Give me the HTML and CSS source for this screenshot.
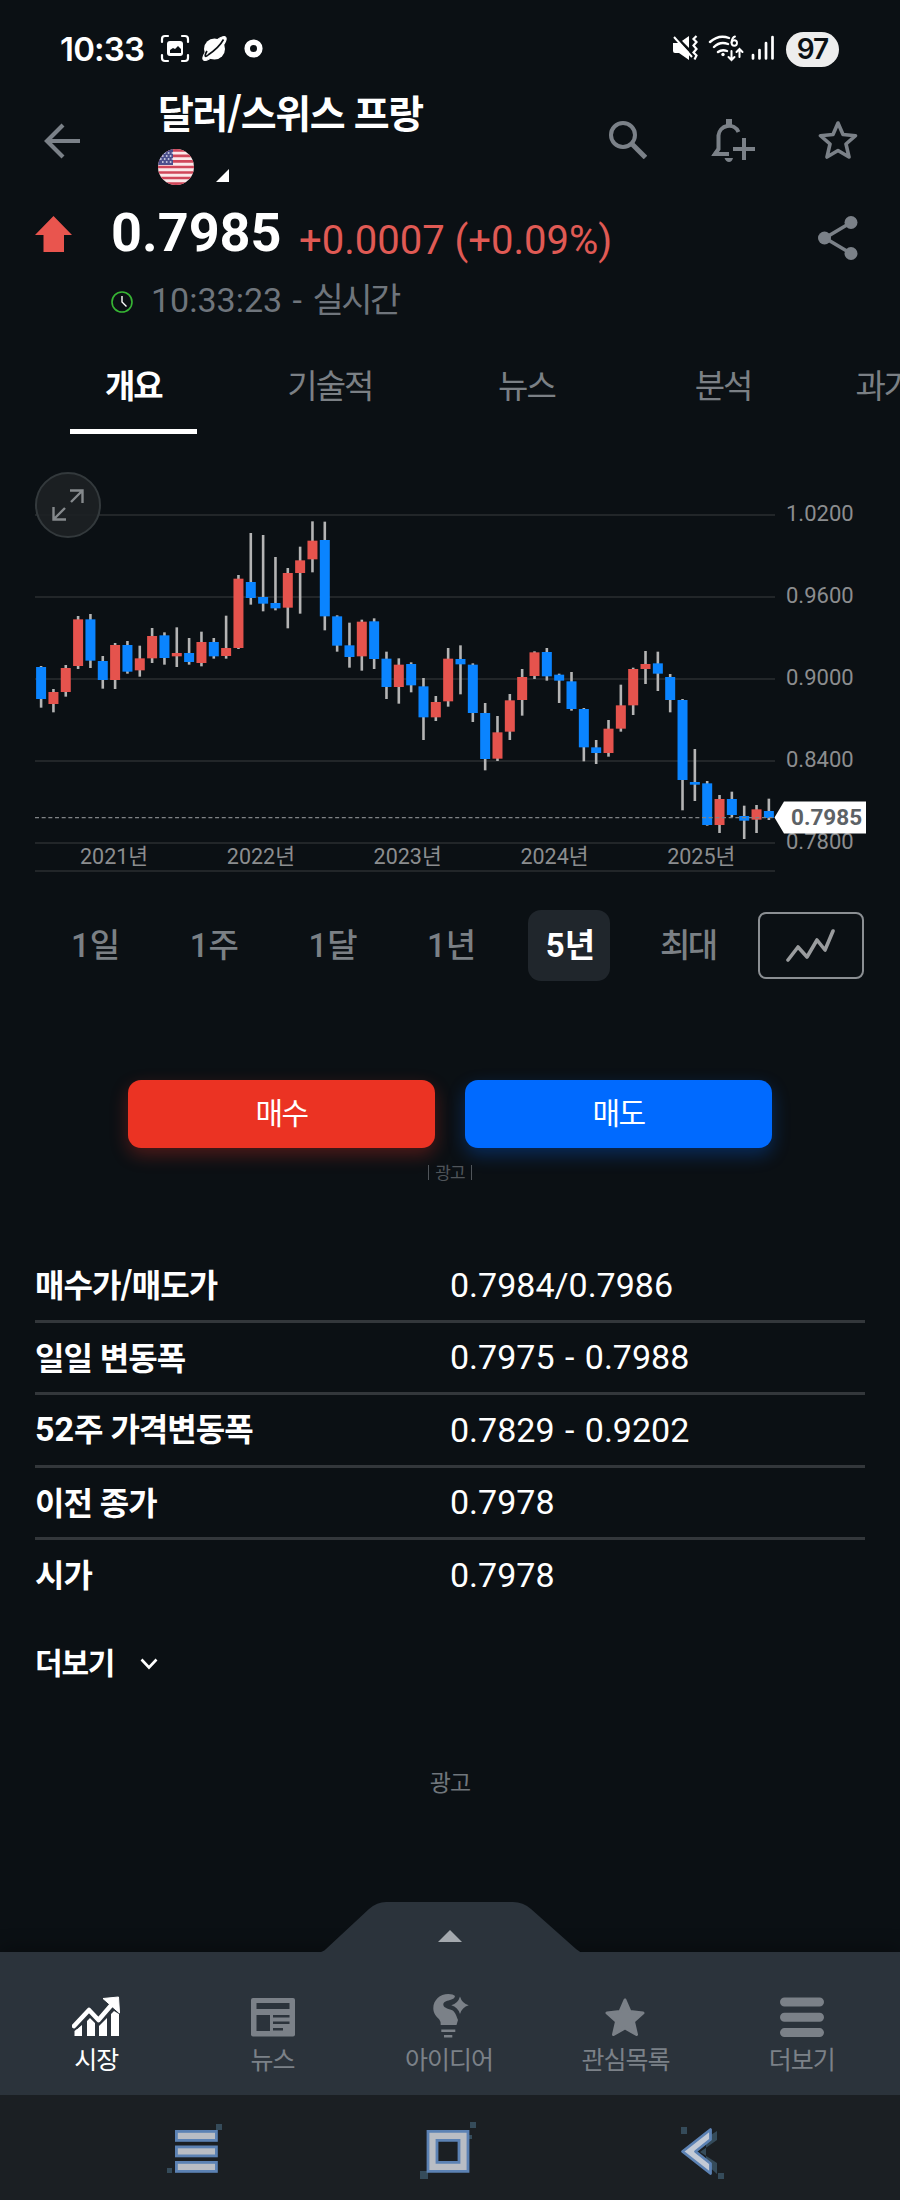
FILE: index.html
```html
<!DOCTYPE html>
<html lang="ko">

<head>
    <meta charset="utf-8">
    <title>달러/스위스 프랑</title>
    <link rel="stylesheet" href="styles.css">
</head>

<body>
    <div class="statusbar">
        <span class="clock">10:33</span>
        <svg class="st-left" width="104" height="30" viewBox="0 0 104 30">
            <g fill="none" stroke="#fff" stroke-width="2.2" stroke-linecap="round">
                <path d="M2 8V5a3 3 0 0 1 3-3h3M22 2h3a3 3 0 0 1 3 3v3M28 21v3a3 3 0 0 1-3 3h-3M8 27H5a3 3 0 0 1-3-3v-3" />
            </g>
            <rect x="7" y="7" width="16" height="15" rx="3" fill="#fff" />
            <path d="M10 19v-3l3-2 2 1 3-3 3 3v4z" fill="#0b1014" />
            <circle cx="54.5" cy="15" r="10.5" fill="#fff" />
            <ellipse cx="54.5" cy="14.5" rx="16" ry="5" transform="rotate(-46 54.5 14.5)" fill="#fff" stroke="#fff" />
            <path d="M48 21C54 17 61 10 63.500 5.500" stroke="#0b1014" stroke-width="1.6" fill="none" />
            <path d="M48 21c-3 3-4 1-1-4" stroke="#0b1014" stroke-width="1.6" fill="none" />
            <circle cx="93.500" cy="14.500" r="6.300" fill="none" stroke="#fff" stroke-width="5.600" />
        </svg>
        <div class="st-right">
            <svg width="104" height="30" viewBox="0 0 104 30">
                <path fill="#fff" d="M1 9h6l10-7v24l-10-7H3a2 2 0 0 1-2-2z" />
                <path d="M1 0l18 18" stroke="#0b1014" stroke-width="3" />
                <path d="M2 3l18 20" stroke="#fff" stroke-width="2" />
                <path d="M24.500 2l-3 3 3 3-3 3.500 3 3.500-3 3.500 3 3-2 4" stroke="#fff" stroke-width="2.200" fill="none" />
                <g fill="none" stroke="#fff" stroke-width="2.400" stroke-linecap="round">
                    <path d="M38 8q9-8 19-4M42 13q6-6 14-3M46 18q4-3 9-1" />
                    <path d="M63 2.500q-3 1-3.500 6" stroke-width="1.900" />
                    <circle cx="62.300" cy="9" r="2.700" stroke-width="1.900" />
                    <path d="M59.500 17v9m-3-3l3 3 3-3M67.500 23v-8m-3 3l3-3 3 3" stroke-width="2" />
                    <path d="M81 21v3.500M87.500 16v8.500M94 9v15.500M100.500 3v21.500" stroke-width="2.700" />
                </g>
                <circle cx="51" cy="20.500" r="1.700" fill="#fff" />
            </svg>
            <span class="battery">97</span>
        </div>
    </div>

    <div class="header">
        <svg class="back" width="36" height="36" viewBox="0 0 36 36">
            <path d="M36 18H3M19 2L3 18l16 16" fill="none" stroke="#7b8188" stroke-width="4.200" />
        </svg>
        <div class="title">
            <h1>달러/스위스 프랑</h1>
            <div class="flags">
                <svg width="36" height="36" viewBox="0 0 36 36">
                    <defs>
                        <clipPath id="round">
                            <circle cx="18" cy="18" r="18" />
                        </clipPath>
                    </defs>
                    <g clip-path="url(#round)">
                        <rect width="36" height="36" fill="#fbe9ea" />
                        <path stroke="#d0475a" stroke-width="2.700" d="M0 1.400h36M0 6.900h36M0 12.400h36M0 18h36M0 23.500h36M0 29h36M0 34.600h36" />
                        <rect width="15" height="16" fill="#4b4f8c" />
                        <path stroke="#dfe0ee" stroke-width="1.600" stroke-dasharray="1.600 2.300" d="M2 4h13M4 7h11M2 10h13M4 13h11" />
                    </g>
                </svg>
                <svg width="13" height="13" viewBox="0 0 13 13">
                    <path d="M13 0v13H0z" fill="#fff" />
                </svg>
            </div>
        </div>
        <div class="actions">
            <svg width="38" height="38" viewBox="0 0 38 38">
                <circle cx="14" cy="14" r="12" fill="none" stroke="#7b8188" stroke-width="4" />
                <path d="M23.500 23.500L36.500 36.500" stroke="#7b8188" stroke-width="5" />
            </svg>
            <svg class="bell" width="44" height="44" viewBox="0 0 44 44">
                <g fill="none" stroke="#7b8188" stroke-width="4">
                    <path d="M18 36H4l3.500-5V17.500a10.500 10.500 0 0 1 20-3.500" />
                    <path d="M33 20v22M22 31h22" stroke-linecap="butt" />
                    <path d="M18 1v6" stroke-width="6" />
                </g>
                <path d="M1 37l6-8v8z" fill="#7b8188" />
                <path d="M13.500 40h8.500q-1 4-4 4t-4.500-4z" fill="#7b8188" />
            </svg>
            <svg width="40" height="40" viewBox="0 0 40 40">
                <path d="M20 3l5 11.500 12.500 1.200-9.500 8.300 3 13L20 30.500 9 37l3-13-9.500-8.300L15 14.500z" fill="none" stroke="#7b8188" stroke-width="3.600" stroke-linejoin="round" />
            </svg>
        </div>
    </div>

    <div class="quote">
        <svg class="up" width="37" height="36" viewBox="0 0 37 36">
            <path d="M18.500 0L37 19h-8v17H8.500V19H0z" fill="#e9554e" />
        </svg>
        <div class="price">
            <div class="price-line">
                <strong>0.7985</strong>
                <span class="change">+0.0007 (+0.09%)</span>
            </div>
            <div class="time">
                <svg width="22" height="22" viewBox="0 0 22 22">
                    <circle cx="11" cy="11" r="10" fill="none" stroke="#37b534" stroke-width="1.600" />
                    <path d="M11 5v6l4.500 4.500" fill="none" stroke="#fff" stroke-width="1.400" />
                </svg>
                <span>10:33:23 - <span class="ko">실시간</span></span>
            </div>
        </div>
        <svg class="share" width="40" height="44" viewBox="0 0 40 44">
            <path d="M33 6.500L7 22l26 15.500" fill="none" stroke="#7b8188" stroke-width="3.600" />
            <g fill="#7b8188">
                <circle cx="33" cy="6.500" r="6.500" />
                <circle cx="6.500" cy="22" r="6.500" />
                <circle cx="33" cy="37.500" r="6.500" />
            </g>
        </svg>
    </div>

    <div class="tabs">
        <div class="tab active">개요</div>
        <div class="tab">기술적</div>
        <div class="tab">뉴스</div>
        <div class="tab">분석</div>
        <div class="tab last">과거</div>
    </div>

    <div class="chart">
        <svg id="chart" width="900" height="430" viewBox="0 0 900 430"></svg>
        <div class="expand">
            <svg width="32" height="32" viewBox="0 0 32 32">
                <path d="M18 1.500h12.500V14M30.500 1.500L19 13M1.500 18v12.500H14M1.500 30.500L13 19" fill="none" stroke="#85898c" stroke-width="2.400" />
            </svg>
        </div>
    </div>

    <div class="periods">
        <div class="period">1<span class="ko">일</span></div>
        <div class="period">1<span class="ko">주</span></div>
        <div class="period">1<span class="ko">달</span></div>
        <div class="period">1<span class="ko">년</span></div>
        <div class="period"><span class="selected">5<span class="ko">년</span></span></div>
        <div class="period"><span class="ko">최대</span></div>
        <div class="charttype">
            <svg width="50" height="34" viewBox="0 0 50 34">
                <path d="M2 31L12 18l9 10L31 11l8 10L47 2" fill="none" stroke="#9a9c9e" stroke-width="3.600" stroke-linejoin="round" stroke-linecap="round" />
            </svg>
        </div>
    </div>

    <div class="trade">
        <div class="buy">매수</div>
        <div class="sell">매도</div>
    </div>
    <div class="adnote"><span>광고</span></div>

    <div class="info">
        <div class="row"><b>매수가/매도가</b><span>0.7984/0.7986</span></div>
        <div class="row"><b>일일 변동폭</b><span>0.7975 - 0.7988</span></div>
        <div class="row"><b><span class="num">52</span>주 가격변동폭</b><span>0.7829 - 0.9202</span></div>
        <div class="row"><b>이전 종가</b><span>0.7978</span></div>
        <div class="row"><b>시가</b><span>0.7978</span></div>
    </div>
    <div class="more">
        <span>더보기</span>
        <svg width="18" height="12" viewBox="0 0 18 12">
            <path d="M1.500 1.500L9 9.500l7.500-8" fill="none" stroke="#fff" stroke-width="2.600" />
        </svg>
    </div>
    <div class="ad">광고</div>

    <div class="bottom">
        <svg class="handle" width="270" height="51" viewBox="0 0 270 51">
            <path d="M0 51q6-1 9-4L52 7Q60 0 69 0h127q10 0 18 7l45 40q3 3 8 4z" fill="#2b333b" />
            <path d="M133 28l12 12h-24z" fill="#a4a9ae" />
        </svg>
        <div class="nav">
            <div class="item on">
                <svg width="48" height="44" viewBox="0 0 48 44">
                    <path d="M2.500 39V34L10 28V39zM15 39V24l3-3 5 5V39zM27 39V29l8-8V39zM39 39V17l3-3 5 3v22z" fill="#fff" />
                    <path d="M2 29L17 13l9 9L42 6" fill="none" stroke="#2b333b" stroke-width="9" />
                    <path d="M2 29L17 13l9.500 10L42 5" fill="none" stroke="#fff" stroke-width="4.600" stroke-linecap="round" stroke-linejoin="round" />
                    <path d="M31 1.500L46.500 0l1 16z" fill="#fff" stroke="#fff" stroke-linejoin="round" />
                </svg>
                <span>시장</span>
            </div>
            <div class="item">
                <svg width="44" height="44" viewBox="0 0 44 44">
                    <rect y="1" width="44" height="38.500" rx="2" fill="#7b8188" />
                    <path d="M5.500 6h33v6h-33zM5.500 18h13.500v16H5.500zM22 18h16.500v2.500H22zM22 24.500h16.500v2.500H22zM22 31h10v2.500H22z" fill="#2b333b" />
                </svg>
                <span>뉴스</span>
            </div>
            <div class="item">
                <svg class="idea" width="40" height="46" viewBox="0 0 40 46">
                    <path d="M4.300 12.300C4.300 4 11 -2 19.300 -2q5 0 6.700 2c0 2-2 3-5 4-4 1-6.700 2-6.700 4.500 0 3 4 4 8.400 5.500 3 1.500 4 4 6.300 10l-1.500 5H11.700q0-4-1.400-5.500c-3-3-6-6-6-11.200z" fill="#7b8188" />
                    <path d="M31 .6q2 7 8.700 8.700-6.700 2-8.700 8.700-2-6.700-8.700-8.700 6.700-1.700 8.700-8.700z" fill="#7b8188" />
                    <path d="M12.300 34.700h14M15 40.300h8.300" stroke="#7b8188" stroke-width="2.600" />
                </svg>
                <span>아이디어</span>
            </div>
            <div class="item">
                <svg width="40" height="44" viewBox="0 0 40 44">
                    <path d="M20 3l5 11.500 13 1.500-9.500 8.500 3 13L20 31 8.500 37.500l3-13L2 16l13-1.500z" fill="#7b8188" stroke="#7b8188" stroke-width="3" stroke-linejoin="round" />
                </svg>
                <span>관심목록</span>
            </div>
            <div class="item">
                <svg width="44" height="44" viewBox="0 0 44 44">
                    <path d="M4.500 5h35M4.500 20.300h35M4.500 35.600h35" stroke="#7b8188" stroke-width="9" stroke-linecap="round" />
                </svg>
                <span>더보기</span>
            </div>
        </div>
        <div class="sysbar">
            <svg width="60" height="60" viewBox="0 0 60 60">
                <path d="M50 5h6v6h-6zM1 49h5v5H1z" fill="#354b5a" />
                <g fill="#b9bdc4" stroke="#5c82b4" stroke-width="2.800">
                    <rect x="10.400" y="12.400" width="40" height="9" />
                    <rect x="10.400" y="27.900" width="40" height="9" />
                    <rect x="10.400" y="43.400" width="40" height="9" />
                </g>
            </svg>
            <svg width="60" height="60" viewBox="0 0 60 60">
                <path d="M51 3h6v6h-6zM50 16h3v4h-3zM1 52h8v8H1z" fill="#354b5a" />
                <path d="M9 12.400h40v40H9zM18 21.400v22h22v-22z" fill="#b9bdc4" fill-rule="evenodd" stroke="#5c82b4" stroke-width="2.800" />
            </svg>
            <svg width="60" height="60" viewBox="0 0 60 60">
                <path d="M9 8h6v7H9zM46 54h6v6h-6zM45 12v9L28 33l17 11v11L34 45V19z" fill="#354b5a" />
                <path d="M38.500 10.500v10L23.500 32.500l15 12v10L10.500 32.500z" fill="#c3cad6" stroke="#5c82b4" stroke-width="2.800" stroke-linejoin="round" />
            </svg>
        </div>
    </div>

    <script src="chart.js"></script>
</body>

</html>
```
FILE: styles.css
```css
* {
    margin: 0;
    padding: 0;
    box-sizing: border-box;
}

body {
    width: 900px;
    height: 2200px;
    overflow: hidden;
    display: flex;
    flex-direction: column;
    background: #0b1014;
    color: #fff;
    font-family: Roboto, "Noto Sans CJK KR", sans-serif;
}

svg {
    display: block;
    flex: none;
}

.ko {
    letter-spacing: -2.5px;
}

.statusbar {
    display: flex;
    align-items: center;
    height: 96px;
    padding: 2px 61px 0 60px;
}

.clock {
    width: 86px;
    font: 600 33px Inter, sans-serif;
    letter-spacing: -0.8px;
}

.st-left {
    margin-left: 14px;
}

.st-right {
    display: flex;
    align-items: center;
    gap: 10px;
    margin-left: auto;
}

.battery {
    width: 53px;
    height: 35px;
    border-radius: 18px;
    background: #ededed;
    color: #0b1014;
    font: 600 28px/35px Inter, sans-serif;
    letter-spacing: -1px;
    text-align: center;
}

.header {
    display: flex;
    height: 104px;
    padding-right: 42px;
}

.back {
    margin: 27px 0 0 44px;
}

.title {
    margin-left: 78px;
}

h1 {
    height: 53px;
    font: bold 39px/31px "Noto Sans CJK KR", sans-serif;
    letter-spacing: -1.4px;
    white-space: nowrap;
}

.flags {
    display: flex;
    align-items: flex-end;
    gap: 22px;
}

.flags svg:last-child {
    margin-bottom: 3px;
}

.actions {
    display: flex;
    align-items: center;
    margin-left: auto;
    height: 88px;
}

.bell {
    margin: 0 63px 0 64px;
}

.quote {
    display: flex;
    height: 142px;
    padding: 0 42px 0 35px;
}

.up {
    margin-top: 16px;
}

.price {
    margin-left: 39px;
}

.price-line {
    display: flex;
    align-items: baseline;
    height: 83px;
}

.price-line strong {
    width: 188px;
    font-size: 54px;
    line-height: 66px;
}

.change {
    padding-top: 3px;
    color: #e05a54;
    font-size: 40px;
    transform: translateY(3px);
}

.time {
    display: flex;
    align-items: center;
    gap: 18px;
    height: 38px;
    color: #6f757c;
    font-size: 34px;
    line-height: 32px;
    word-spacing: 2px;
}

.time span {
    margin-top: -5px;
}

.share {
    margin: 16px 0 0 auto;
}

.tabs {
    display: flex;
    height: 108px;
    padding-left: 35px;
    overflow: hidden;
}

.tab {
    display: flex;
    flex-direction: column;
    flex: none;
    align-items: center;
    width: 196.600px;
    padding-top: 17px;
    color: #7b8085;
    font: 33px/50px "Noto Sans CJK KR", sans-serif;
    letter-spacing: -2px;
}

.tab.active {
    color: #fff;
    font-weight: bold;
}

.tab.active::after {
    content: "";
    width: 127px;
    height: 5px;
    margin-top: 20px;
    background: #fff;
}

.tab.last {
    align-items: flex-start;
    padding-left: 34px;
}

.chart {
    position: relative;
    height: 430px;
}

/* 차트 위에 떠 있는 전체화면 버튼 */
.expand {
    position: absolute;
    left: 35px;
    top: 22px;
    display: flex;
    align-items: center;
    justify-content: center;
    width: 66px;
    height: 66px;
    border: 2px solid #33393c;
    border-radius: 50%;
    background: rgba(29, 33, 36, 0.900);
}

.axis {
    fill: #8b8d8f;
    font-size: 22px;
}

.year {
    font-size: 21.500px;
}

.current {
    fill: #5d6266;
    font-size: 22.500px;
    font-weight: bold;
}

.periods {
    display: flex;
    align-items: center;
    height: 131px;
    padding: 0 36px 0 35px;
}

.period {
    display: flex;
    justify-content: center;
    width: 118.700px;
    color: #7b8085;
    font-size: 33px;
    line-height: 50px;
    font-weight: 500;
}

.selected {
    width: 82px;
    height: 71px;
    border-radius: 13px;
    background: #20262c;
    color: #fff;
    font-weight: bold;
    line-height: 71px;
    text-align: center;
}

.charttype {
    display: flex;
    align-items: center;
    justify-content: center;
    width: 106px;
    height: 67px;
    margin-left: auto;
    border: 2px solid #8b8f93;
    border-radius: 8px;
}

.trade {
    display: flex;
    justify-content: center;
    gap: 30px;
    margin-top: 69px;
    font: 30px/63px "Noto Sans CJK KR", sans-serif;
    letter-spacing: -1.500px;
    text-align: center;
}

.buy,
.sell {
    width: 307px;
    height: 68px;
    border-radius: 13px;
}

.buy {
    background: #eb3323;
    box-shadow: 0 7px 18px rgba(235, 51, 35, 0.300);
}

.sell {
    background: #006aff;
    box-shadow: 0 7px 18px rgba(0, 106, 255, 0.300);
}

.adnote {
    display: flex;
    justify-content: center;
    height: 102px;
    padding-top: 17px;
    color: #50555a;
    font: 17px/13px "Noto Sans CJK KR", sans-serif;
    letter-spacing: -1px;
}

.adnote span {
    height: 15px;
    padding: 0 6px;
    border: solid #50555a;
    border-width: 0 1px;
}

.info {
    padding: 0 35px;
}

.row {
    display: flex;
    align-items: center;
    height: 72.500px;
    border-bottom: 3px solid #33373b;
    font-size: 34px;
    word-spacing: 2px;
}

.row:last-child {
    border: 0;
}

.row:last-child span {
    margin-top: -3px;
}

.row b {
    width: 415px;
    padding-bottom: 3px;
    font: bold 32px/46px "Noto Sans CJK KR", sans-serif;
    letter-spacing: -1px;
    word-spacing: 0;
}

.row:last-child b {
    padding-bottom: 7px;
}

.num {
    font-family: Roboto, sans-serif;
    font-size: 34px;
    letter-spacing: 0;
}

.more {
    display: flex;
    align-items: center;
    gap: 26px;
    height: 50px;
    margin: 26px 35px 0;
    font: bold 30px/44px "Noto Sans CJK KR", sans-serif;
    letter-spacing: -1.200px;
}

.more span {
    padding-bottom: 5px;
}

.ad {
    margin-top: 75px;
    color: #70767c;
    font: 23px/34px "Noto Sans CJK KR", sans-serif;
    letter-spacing: -1px;
    text-align: center;
}

.bottom {
    margin-top: auto;
}

.handle {
    position: relative;
    z-index: 1;
    margin: 0 auto -1px 317px;
}

.nav {
    display: flex;
    height: 143px;
    padding: 44px 10px 0 8px;
    background: #2b333b;
    box-shadow: 0 -6px 16px rgba(0, 0, 0, 0.250);
}

.item {
    display: flex;
    flex: 1;
    flex-direction: column;
    align-items: center;
    color: #7b8188;
    font: 25px/32px "Noto Sans CJK KR", sans-serif;
    letter-spacing: -1px;
}

.item svg {
    height: 46px;
}

.idea {
    overflow: visible;
}

.on {
    color: #fff;
}

.sysbar {
    display: flex;
    justify-content: space-between;
    height: 105px;
    padding: 24px 168px 0 166px;
    background: #1b1f23;
}
```
FILE: chart.js
```js
var svg = document.getElementById("chart");
var html = "";

// [색, 고가, 몸통 위, 몸통 아래, 저가] 단위는 1/3px
var candles = [
    ["b", 648, 651, 747, 773], ["r", 717, 726, 762, 787], ["r", 645, 654, 726, 740],
    ["r", 498, 508, 648, 657], ["b", 492, 508, 632, 654], ["b", 618, 633, 690, 716],
    ["r", 579, 585, 690, 717], ["b", 573, 585, 665, 671], ["r", 587, 625, 661, 680],
    ["r", 534, 558, 625, 639], ["b", 547, 556, 624, 644], ["r", 532, 609, 619, 651],
    ["b", 564, 609, 636, 644], ["r", 545, 576, 639, 649], ["b", 564, 576, 619, 626],
    ["r", 497, 594, 618, 626], ["r", 375, 386, 594, 597], ["b", 249, 396, 444, 464],
    ["b", 255, 441, 461, 484], ["b", 321, 459, 475, 481], ["r", 354, 369, 473, 535],
    ["r", 290, 331, 369, 491], ["r", 214, 272, 328, 367], ["b", 215, 270, 499, 541],
    ["b", 496, 499, 587, 605], ["b", 518, 586, 621, 653], ["r", 509, 515, 619, 662],
    ["b", 505, 514, 627, 657], ["b", 605, 626, 711, 747], ["r", 625, 644, 711, 761],
    ["b", 637, 642, 706, 727], ["b", 684, 709, 802, 870], ["r", 738, 756, 802, 813],
    ["r", 594, 626, 754, 770], ["b", 586, 627, 643, 733], ["b", 640, 644, 789, 816],
    ["b", 759, 789, 927, 961], ["r", 798, 847, 926, 933], ["r", 732, 751, 845, 870],
    ["r", 657, 681, 750, 797], ["r", 604, 607, 678, 687], ["b", 594, 606, 679, 692],
    ["b", 671, 674, 692, 759], ["b", 666, 694, 777, 782], ["b", 774, 777, 892, 934],
    ["b", 870, 892, 909, 942], ["r", 810, 836, 909, 920], ["r", 704, 766, 836, 845],
    ["r", 653, 657, 766, 795], ["r", 603, 642, 657, 702], ["b", 605, 640, 671, 723],
    ["b", 672, 681, 750, 787], ["b", 747, 750, 990, 1081], ["b", 897, 996, 1004, 1053],
    ["b", 993, 1000, 1125, 1127], ["r", 1035, 1047, 1125, 1149], ["b", 1025, 1047, 1095, 1102],
    ["b", 1067, 1098, 1112, 1167], ["r", 1065, 1078, 1109, 1149], ["b", 1046, 1083, 1104, 1110]
];

// 가로선과 가격 눈금
var lines = [65, 147, 229, 311, 393, 421];
var labels = ["1.0200", "0.9600", "0.9000", "0.8400", "0.7800"];
for (let i in lines) {
    html += `<path d="M35 ${lines[i]}H775" stroke="#222629" stroke-width="2"/>`;
    if (labels[i]) {
        html += `<text class="axis" x="786" y="${lines[i] + 6}">${labels[i]}</text>`;
    }
}

for (let i = 0; i < 5; i++) {
    html += `<text class="axis year" x="${80 + i * 146.8}" y="413.500">${2021 + i}년</text>`;
}

for (let i = 0; i < candles.length; i++) {
    let c = candles[i];
    let x = 41.1 + i * 12.335;
    let color = c[0] == "r" ? "#e5534d" : "#0a84ff";
    html += `<path d="M${x} ${c[1] / 3}V${c[4] / 3}" stroke="#b4b4b4" stroke-width="2.600"/>`;
    html += `<rect x="${x - 5}" y="${c[2] / 3}" width="10" height="${(c[3] - c[2]) / 3}" fill="${color}"/>`;
}

// 현재가
html += '<path d="M35 367.700H775" stroke="#808386" stroke-width="1.300" stroke-dasharray="4 2.670"/>';
html += '<path d="M774.500 367.500L784 351.500h82v32h-82z" fill="#fff"/>';
html += '<text class="current" x="791" y="375">0.7985</text>';

svg.innerHTML = html;
```
